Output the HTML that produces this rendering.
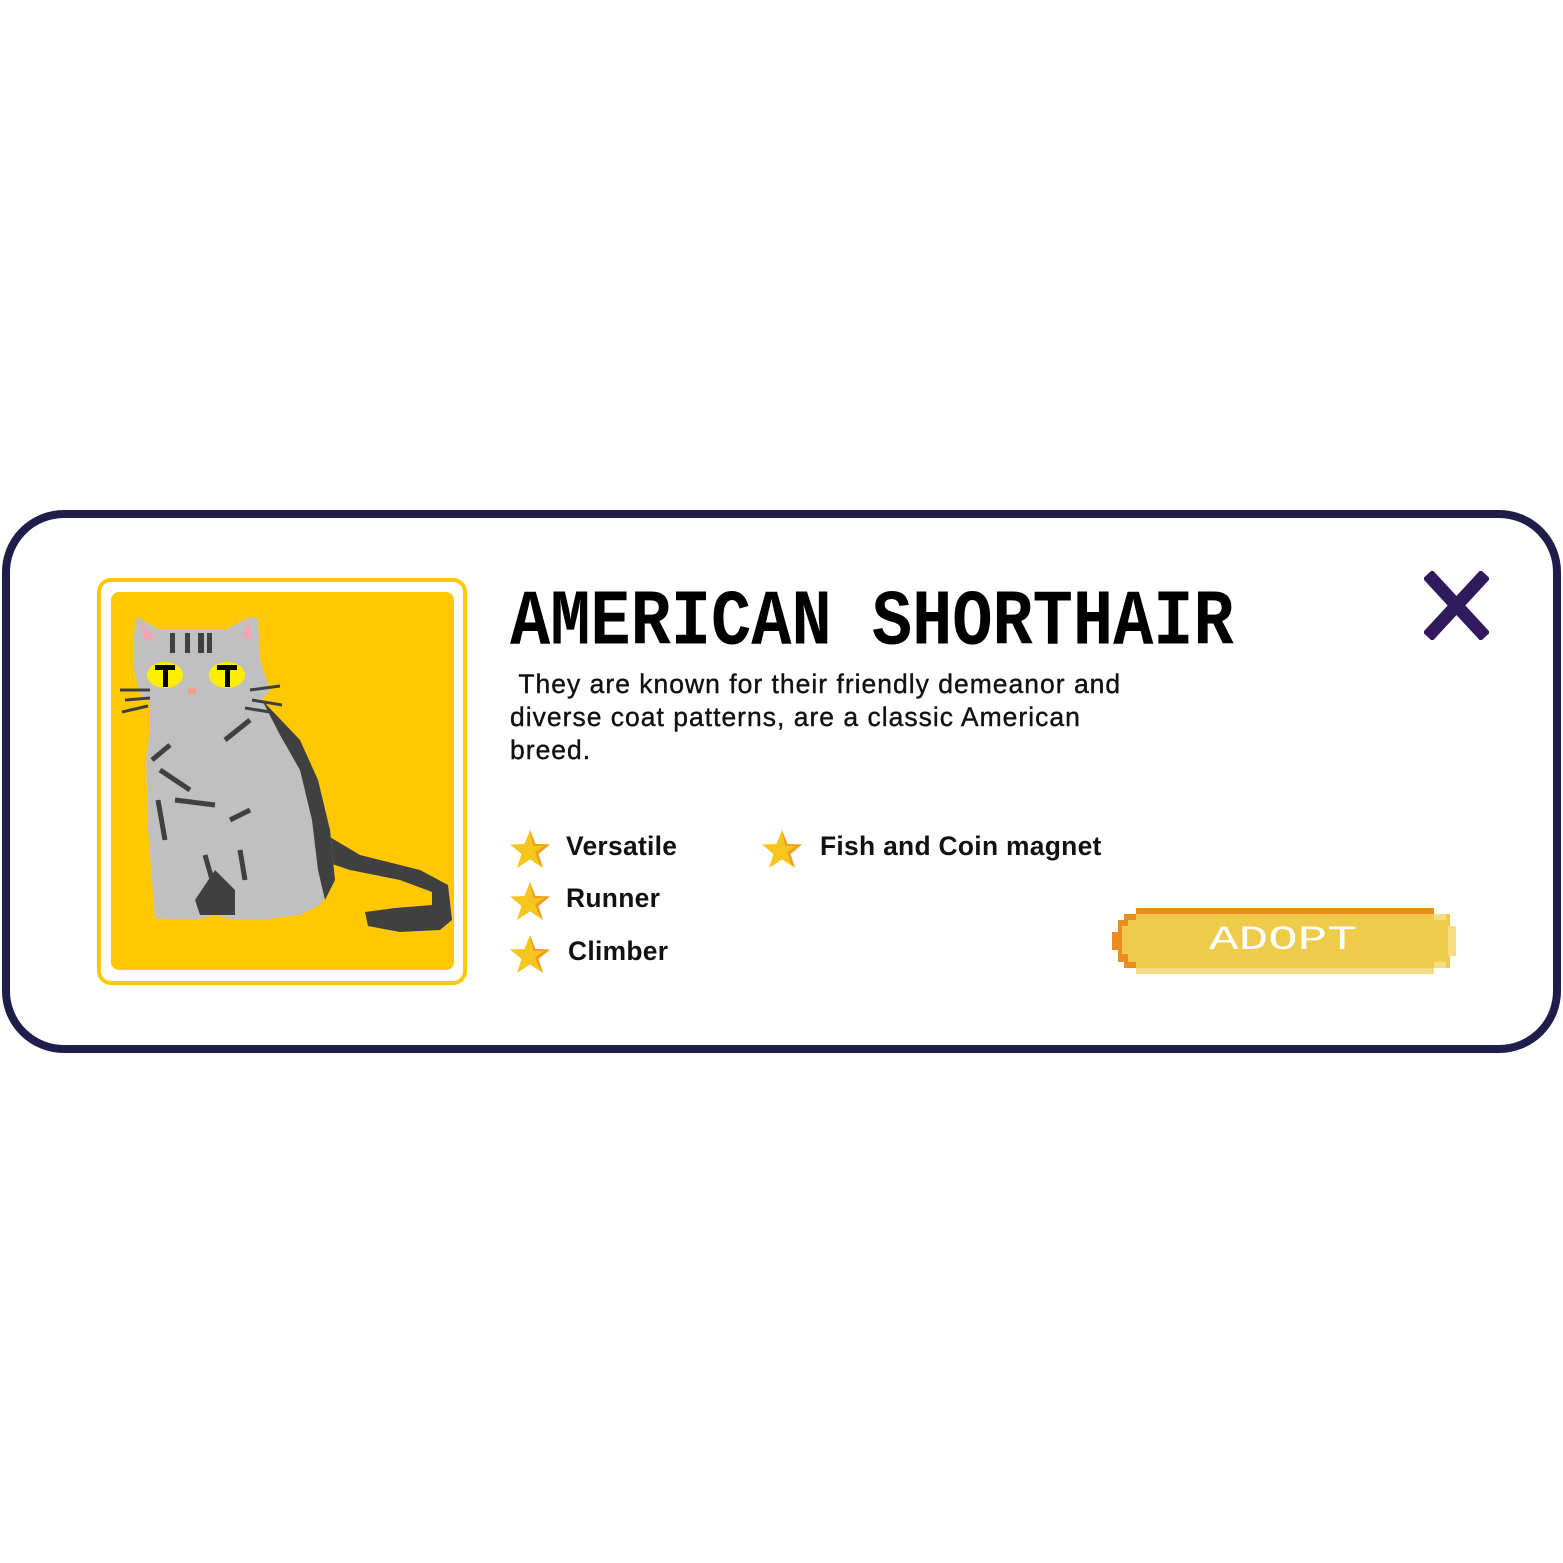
<!DOCTYPE html>
<html><head><meta charset="utf-8"><style>
*{margin:0;padding:0;box-sizing:border-box}
body{width:1563px;height:1563px;background:#fff;position:relative;overflow:hidden;font-family:"Liberation Sans",sans-serif}
.card{position:absolute;left:2px;top:510px;width:1559px;height:543px;border:8px solid #1f1d4a;border-radius:62px;background:#fff}
.abs{position:absolute}
.title{left:510px;top:582px;font-family:"Liberation Mono",monospace;font-weight:bold;font-size:67px;line-height:70px;color:#000;transform:scaleY(1.18);transform-origin:0 0;white-space:nowrap}
.desc{left:510px;top:668px;font-size:26.5px;line-height:33px;color:#111;width:625px;letter-spacing:1px;-webkit-text-stroke:0.4px #111}
.feat{font-size:26.4px;font-weight:bold;color:#111;letter-spacing:0.3px;white-space:nowrap}
</style></head><body>
<div class="card"></div>

<div class="abs" style="left:97px;top:578px;width:370px;height:407px;border:4px solid #ffc800;border-radius:14px"></div>
<div class="abs" style="left:111px;top:592px;width:343px;height:378px;background:#ffc800;border-radius:8px"></div>
<svg class="abs" style="left:111px;top:592px" width="343" height="378" viewBox="111 592 343 378">
 <path d="M318 830 L360 855 L420 870 L448 885 L452 920 L440 930 L400 932 L368 926 L365 912 L395 908 L432 905 L432 892 L400 880 L350 870 L320 860Z" fill="#404040"/>
 <path d="M150 700 L262 700 L300 740 L318 780 L330 830 L335 880 L320 905 L300 915 L275 918 L262 920 L235 920 L215 915 L195 920 L155 918 L152 880 L148 830 L146 760 L150 730Z" fill="#c0c0c0"/>
 <path d="M262 700 L300 740 L318 780 L330 830 L335 880 L325 900 L318 870 L312 820 L300 770 L280 735Z" fill="#404040"/>
 <path d="M195 900 L215 870 L235 890 L235 915 L200 915Z" fill="#404040"/>
 <path d="M133 640 L137 617 L160 630 L225 630 L250 617 L258 618 L260 660 L270 690 L255 708 L160 710 L140 695 L133 665Z" fill="#c0c0c0"/>
 <path d="M140 622 L155 636 L145 642Z M248 620 L242 636 L252 640Z" fill="#f4a3b5"/>
 <rect x="170" y="633" width="5" height="20" fill="#404040"/><rect x="185" y="633" width="5" height="20" fill="#404040"/><rect x="198" y="633" width="6" height="20" fill="#404040"/><rect x="207" y="633" width="5" height="20" fill="#404040"/>
 <ellipse cx="165" cy="675" rx="18" ry="13" fill="#ffee00"/><ellipse cx="227" cy="675" rx="18" ry="13" fill="#ffee00"/>
 <path d="M155 665 L175 665 L175 670 L168 670 L168 687 L163 687 L163 670 L155 670Z M217 665 L237 665 L237 670 L230 670 L230 687 L225 687 L225 670 L217 670Z" fill="#000"/>
 <rect x="188" y="688" width="8" height="6" fill="#f0a090"/>
 <path d="M120 690 L150 690 M125 700 L150 698 M122 712 L148 706 M250 690 L280 686 M252 700 L282 705 M245 708 L270 712" stroke="#404040" stroke-width="3"/>
 <path d="M160 770 L190 790 M175 800 L215 805 M230 820 L250 810 M205 855 L215 890 M240 850 L245 880 M225 740 L250 720" stroke="#404040" stroke-width="5"/>
 <path d="M158 800 L165 840 M152 760 L170 745" stroke="#404040" stroke-width="5"/>
</svg>

<div class="abs title">AMERICAN SHORTHAIR</div>
<div class="abs desc">&nbsp;They are known for their friendly demeanor and diverse coat patterns, are a classic American breed.</div>

<svg width="0" height="0" style="position:absolute"><defs>
<g id="star"><polygon points="20,0 25.5,14 40,14.5 28.5,24 33,38 20,29.5 7,38 11.5,24 0,14.5 14.5,14" fill="#f7c61e"/><polygon points="20,0 25.5,14 40,14.5 28.5,24 33,38 29,33 25,22 34,16 23,16" fill="#f0a020"/></g>
</defs></svg>
<svg class="abs" style="left:510px;top:830px" width="42" height="40"><use href="#star"/></svg>
<svg class="abs" style="left:510px;top:882px" width="42" height="40"><use href="#star"/></svg>
<svg class="abs" style="left:510px;top:935px" width="42" height="40"><use href="#star"/></svg>
<svg class="abs" style="left:762px;top:830px" width="42" height="40"><use href="#star"/></svg>
<div class="abs feat" style="left:566px;top:831px">Versatile</div>
<div class="abs feat" style="left:566px;top:883px">Runner</div>
<div class="abs feat" style="left:568px;top:936px">Climber</div>
<div class="abs feat" style="left:820px;top:831px">Fish and Coin magnet</div>

<svg class="abs" style="left:1424px;top:571px" width="65" height="69" viewBox="0 0 65 69">
 <path d="M8 8 L57 61 M57 8 L8 61" stroke="#2e1a5c" stroke-width="13" stroke-linecap="square"/>
</svg>

<svg class="abs" style="left:1110px;top:906px" width="350" height="70" viewBox="0 0 350 70">
 <rect x="26" y="2" width="298" height="6" fill="#eb8c1e"/>
 <rect x="26" y="62" width="298" height="6" fill="#f6dc82"/>
 <rect x="14" y="8" width="326" height="54" fill="#efcb4b"/>
 <rect x="8" y="14" width="8" height="42" fill="#efcb4b"/>
 <rect x="338" y="20" width="8" height="30" fill="#f6dc82"/>
 <rect x="324" y="8" width="12" height="6" fill="#f6dc82"/><rect x="324" y="56" width="12" height="6" fill="#f6dc82"/>
 <path d="M26 8 h-12 v6 h-6 v12 h-6 v18 h6 v12 h6 v6 h12 v-6 h-8 v-8 h-6 v-28 h6 v-6 h8z" fill="#eb8c1e"/>
</svg>
<div class="abs" style="left:1209px;top:924px;font-family:'Liberation Mono',monospace;font-size:34px;line-height:34px;color:#fff;white-space:nowrap;transform:scaleX(1.45);transform-origin:0 0">ADOPT</div>
</body></html>
